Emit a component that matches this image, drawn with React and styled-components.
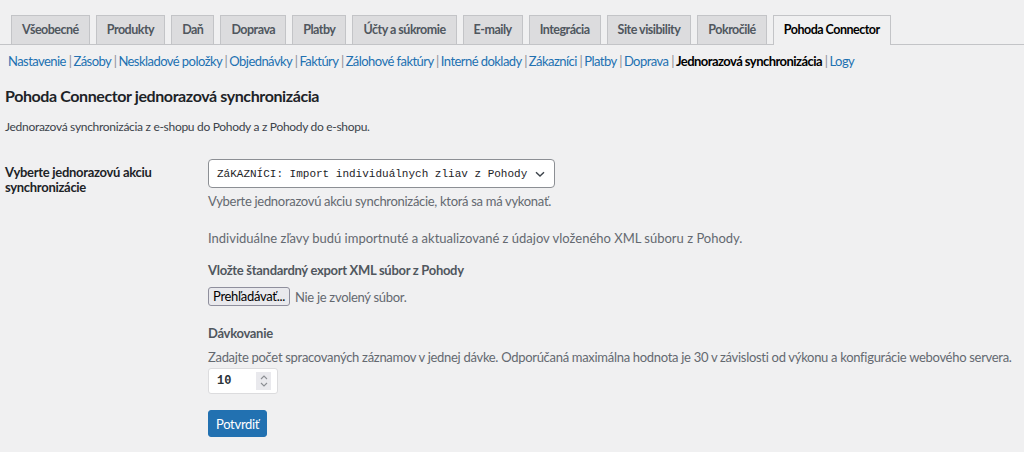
import React from "react";
import styled, { createGlobalStyle } from "styled-components";

const GlobalStyle = createGlobalStyle`
  body {
    margin: 0;
    background: #f0f0f1;
    font-family: Lato, "Open Sans", sans-serif;
    letter-spacing: -0.3px;
    color: #3c434a;
  }
`;

const tabs = [
  "Všeobecné",
  "Produkty",
  "Daň",
  "Doprava",
  "Platby",
  "Účty a súkromie",
  "E-maily",
  "Integrácia",
  "Site visibility",
  "Pokročilé",
  "Pohoda Connector"
];

const subLinks = [
  "Nastavenie",
  "Zásoby",
  "Neskladové položky",
  "Objednávky",
  "Faktúry",
  "Zálohové faktúry",
  "Interné doklady",
  "Zákazníci",
  "Platby",
  "Doprava",
  "Jednorazová synchronizácia",
  "Logy"
];

export default function App() {
  return (
    <Page>
      <GlobalStyle />
      <TabBar>
        {tabs.map((t) => (
          <Tab key={t} active={t === "Pohoda Connector"}>
            {t}
          </Tab>
        ))}
      </TabBar>

      <SubNav>
        {subLinks.map((l, i) => (
          <SubItem key={l}>
            <SubLink current={l === "Jednorazová synchronizácia"}>{l}</SubLink>
            {i < subLinks.length - 1 ? <Sep> |</Sep> : null}
          </SubItem>
        ))}
      </SubNav>

      <Heading>Pohoda Connector jednorazová synchronizácia</Heading>
      <Intro>Jednorazová synchronizácia z e-shopu do Pohody a z Pohody do e-shopu.</Intro>

      <FormRow>
        <Label>Vyberte jednorazovú akciu synchronizácie</Label>
        <Field>
          <Select>
            <SelectText>ZáKAZNÍCI: Import individuálnych zliav z Pohody</SelectText>
            <svg width="12" height="12" viewBox="0 0 12 12">
              <path d="M2 4.2 L6 8 L10 4.2" fill="none" stroke="#3c434a" strokeWidth="1.4" />
            </svg>
          </Select>
          <Hint top={4}>Vyberte jednorazovú akciu synchronizácie, ktorá sa má vykonať.</Hint>

          <Note>Individuálne zľavy budú importnuté a aktualizované z údajov vloženého XML súboru z Pohody.</Note>

          <SubLabel>Vložte štandardný export XML súbor z Pohody</SubLabel>
          <FileRow>
            <FileButton>Prehľadávať...</FileButton>
            <Hint>Nie je zvolený súbor.</Hint>
          </FileRow>

          <SubLabel top={18}>Dávkovanie</SubLabel>
          <Hint>
            Zadajte počet spracovaných záznamov v jednej dávke. Odporúčaná maximálna hodnota je 30 v
            závislosti od výkonu a konfigurácie webového servera.
          </Hint>
          <NumberBox>
            <span>10</span>
            <Spinner>
              <svg width="10" height="16" viewBox="0 0 10 16">
                <path d="M2 6 L5 3 L8 6 M2 10 L5 13 L8 10" fill="none" stroke="#8c8f94" strokeWidth="1.1" />
              </svg>
            </Spinner>
          </NumberBox>

          <Submit>Potvrdiť</Submit>
        </Field>
      </FormRow>
    </Page>
  );
}

const Page = styled.div`
  width: 1024px;
  height: 452px;
  overflow: hidden;
  padding-top: 15px;
  box-sizing: border-box;
`;

const TabBar = styled.div`
  display: flex;
  align-items: flex-end;
  gap: 6px;
  padding-left: 11px;
  border-bottom: 1px solid #c3c4c7;
`;

const Tab = styled.div`
  padding: 5px 10px;
  font-size: 12.5px;
  font-weight: 700;
  letter-spacing: -0.5px;
  line-height: 18px;
  border: 1px solid #c3c4c7;
  border-bottom: none;
  margin-bottom: ${({ active }) => (active ? "-1px" : "0")};
  padding-bottom: ${({ active }) => (active ? "6px" : "5px")};
  background: ${({ active }) => (active ? "#f0f0f1" : "#dcdcde")};
  color: ${({ active }) => (active ? "#000" : "#50575e")};
  white-space: nowrap;
`;

const SubNav = styled.div`
  display: flex;
  flex-wrap: wrap;
  padding: 7px 0 0 8px;
  font-size: 13px;
  letter-spacing: -0.55px;
  line-height: 18px;
`;

const SubItem = styled.span`
  white-space: pre;
`;

const SubLink = styled.span`
  color: ${({ current }) => (current ? "#000" : "#2271b1")};
  font-weight: ${({ current }) => (current ? 700 : 400)};
`;

const Sep = styled.span`
  color: #8c8f94;
  margin-right: 2px;
`;

const Heading = styled.h2`
  margin: 14px 0 0 5px;
  font-size: 16px;
  font-weight: 700;
  letter-spacing: -0.4px;
  line-height: 24px;
  color: #1d2327;
`;

const Intro = styled.p`
  margin: 10px 0 0 5px;
  font-size: 12px;
  line-height: 18px;
`;

const FormRow = styled.div`
  display: flex;
  margin-top: 23px;
  padding-left: 5px;
`;

const Label = styled.div`
  flex: 0 0 170px;
  margin-right: 33px;
  padding-top: 6px;
  font-size: 13px;
  font-weight: 700;
  line-height: 15px;
  color: #1d2327;
`;

const Field = styled.div`
  flex: 1;
  display: flex;
  flex-direction: column;
  align-items: flex-start;
`;

const Select = styled.div`
  display: flex;
  align-items: center;
  justify-content: space-between;
  box-sizing: border-box;
  height: 29px;
  width: 347px;
  padding: 0 8px;
  background: #fff;
  border: 1px solid #8c8f94;
  border-radius: 4px;
  color: #1d2327;
`;

const SelectText = styled.span`
  white-space: nowrap;
  letter-spacing: 0;
  font-family: "Liberation Mono", "DejaVu Sans Mono", monospace;
  font-size: 11px;
`;

const Hint = styled.span`
  margin-top: ${({ top }) => (top ? `${top}px` : "0")};
  font-size: 13px;
  line-height: 18px;
  color: #646970;
`;

const Note = styled.p`
  margin: 19px 0 0;
  font-size: 13px;
  letter-spacing: 0;
  line-height: 18px;
  color: #646970;
`;

const SubLabel = styled.div`
  margin-top: ${({ top }) => (top ? `${top}px` : "14px")};
  margin-bottom: 6px;
  font-size: 13px;
  font-weight: 700;
  line-height: 18px;
  color: #50575e;
`;

const FileRow = styled.div`
  display: flex;
  align-items: center;
  gap: 5px;
  margin-top: 2px;
`;

const FileButton = styled.span`
  box-sizing: border-box;
  height: 19px;
  padding: 0 4px;
  font-size: 13px;
  line-height: 17px;
  color: #000;
  background: #e9e9ed;
  border: 1px solid #8f8f9d;
  border-radius: 3px;
`;

const NumberBox = styled.div`
  display: flex;
  align-items: center;
  justify-content: space-between;
  box-sizing: border-box;
  margin-top: 2px;
  width: 70px;
  height: 26px;
  padding: 0 6px 0 8px;
  background: #fff;
  border: 1px solid #dcdcde;
  border-radius: 3px;
  font-family: "Liberation Mono", "DejaVu Sans Mono", monospace;
  letter-spacing: 0;
  font-size: 12px;
  font-weight: 700;
  color: #2c3338;
`;

const Spinner = styled.span`
  display: flex;
  align-items: center;
  justify-content: center;
  width: 15px;
  height: 18px;
  background: #e9e9ed;
`;

const Submit = styled.button`
  align-self: flex-start;
  margin-top: 16px;
  height: 27px;
  padding: 0 7px;
  font-family: inherit;
  letter-spacing: -0.3px;
  font-size: 13px;
  color: #fff;
  background: #2271b1;
  border: 1px solid #2271b1;
  border-radius: 3px;
`;
